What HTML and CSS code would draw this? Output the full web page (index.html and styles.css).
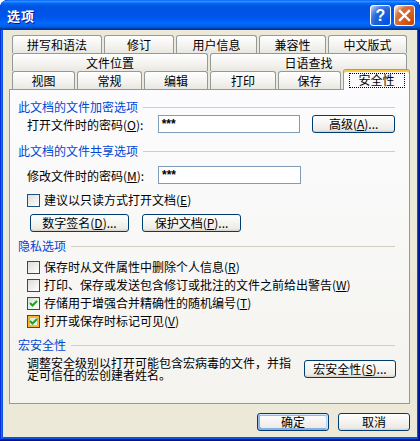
FILE: index.html
```html
<!DOCTYPE html>
<html lang="zh-CN">
<head>
<meta charset="utf-8">
<title>选项</title>
<link rel="stylesheet" href="styles.css">
</head>
<body>
<div class="window">
  <div class="titlebar">
    <span class="title">选项</span>
    <div class="tb-buttons">
      <div class="tb-btn help">?</div>
      <div class="tb-btn close">
        <svg width="19" height="19" viewBox="0 0 19 19"><path d="M5 5 L14 14 M14 5 L5 14" stroke="#fff" stroke-width="2.4" stroke-linecap="square"/></svg>
      </div>
    </div>
  </div>
  <div class="client">
    <div class="tabs">
      <div class="tabrow row1">
        <div class="tab">拼写和语法</div>
        <div class="tab">修订</div>
        <div class="tab">用户信息</div>
        <div class="tab">兼容性</div>
        <div class="tab">中文版式</div>
      </div>
      <div class="tabrow row2">
        <div class="tab">文件位置</div>
        <div class="tab">日语查找</div>
      </div>
      <div class="tabrow row3">
        <div class="tab">视图</div>
        <div class="tab">常规</div>
        <div class="tab">编辑</div>
        <div class="tab">打印</div>
        <div class="tab">保存</div>
        <div class="tab active"><span class="focus">安全性</span></div>
      </div>
    </div>
    <div class="panel">
      <div class="group-title">此文档的文件加密选项</div>
      <div class="field-row pw1">
        <span class="field-label">打开文件时的密码(<u>O</u>):</span>
        <div class="textbox">***</div>
        <div class="btn btn-adv">高级(<u>A</u>)...</div>
      </div>
      <div class="group-title gt2">此文档的文件共享选项</div>
      <div class="field-row pw2">
        <span class="field-label">修改文件时的密码(<u>M</u>):</span>
        <div class="textbox">***</div>
      </div>
      <div class="check-row single">
        <span class="cb"></span>
        <span>建议以只读方式打开文档(<u>E</u>)</span>
      </div>
      <div class="btn-row">
        <div class="btn btn-wide">数字签名(<u>D</u>)...</div>
        <div class="btn btn-wide">保护文档(<u>P</u>)...</div>
      </div>
      <div class="group-title gt3">隐私选项</div>
      <div class="check-list">
        <div class="check-row">
          <span class="cb"></span>
          <span>保存时从文件属性中删除个人信息(<u>R</u>)</span>
        </div>
        <div class="check-row">
          <span class="cb"></span>
          <span>打印、保存或发送包含修订或批注的文件之前给出警告(<u>W</u>)</span>
        </div>
        <div class="check-row">
          <span class="cb checked"><svg width="11" height="11" viewBox="0 0 11 11"><polyline points="2,5 4.5,7.5 9,3" fill="none" stroke="#21A121" stroke-width="2"/></svg></span>
          <span>存储用于增强合并精确性的随机编号(<u>T</u>)</span>
        </div>
        <div class="check-row">
          <span class="cb checked hot"><svg width="11" height="11" viewBox="0 0 11 11"><polyline points="2,5 4.5,7.5 9,3" fill="none" stroke="#21A121" stroke-width="2"/></svg></span>
          <span>打开或保存时标记可见(<u>V</u>)</span>
        </div>
      </div>
      <div class="group-title gt4">宏安全性</div>
      <div class="macro-row">
        <p class="macro-text">调整安全级别以打开可能包含宏病毒的文件，并指定可信任的宏创建者姓名。</p>
        <div class="btn btn-macro">宏安全性(<u>S</u>)...</div>
      </div>
    </div>
    <div class="footer">
      <div class="btn btn-foot default">确定</div>
      <div class="btn btn-foot">取消</div>
    </div>
  </div>
</div>
</body>
</html>
```
FILE: styles.css
```css
* { box-sizing: border-box; }
html, body { margin: 0; padding: 0; background: #ffffff; }
body {
  font-family: "Noto Sans CJK SC", "Noto Sans", sans-serif;
  font-size: 12px;
  color: #000;
}
u { text-decoration: underline; text-underline-offset: 1px; }

.window {
  width: 420px;
  height: 441px;
  display: flex;
  flex-direction: column;
  background: #0855dd;
  border-radius: 8px 8px 0 0;
  overflow: hidden;
  box-shadow: inset -1px -1px #00138c, inset 1px 1px #0831d9, inset -2px -2px #001ea0, inset 2px 2px #166aee;
}

.titlebar {
  height: 30px;
  flex: none;
  display: flex;
  align-items: center;
  justify-content: space-between;
  padding: 0 5px 0 7px;
  border-radius: 8px 8px 0 0;
  background: linear-gradient(180deg, #0058ee 0%, #3593ff 4%, #288eff 6%, #127dff 8%, #036ffc 10%, #0262ee 14%, #0057e5 20%, #0054e3 24%, #0055eb 56%, #005bf5 66%, #026afe 76%, #0062ef 86%, #0052d6 92%, #0040ab 94%, #003092 100%);
}
.title {
  color: #fff;
  font-weight: bold;
  font-size: 13px;
  letter-spacing: 1px;
  text-shadow: 1px 1px #0f1089;
}
.tb-buttons { display: flex; gap: 3px; }
.tb-btn {
  width: 21px;
  height: 21px;
  border: 1px solid #fff;
  border-radius: 3px;
  display: flex;
  align-items: center;
  justify-content: center;
}
.help {
  background: radial-gradient(circle at 90% 90%, #0054e9 0%, #2263d5 55%, #4479e4 70%, #a3bbec 90%, #fff 100%);
  color: #fff;
  font-family: "Liberation Sans", sans-serif;
  font-weight: bold;
  font-size: 16px;
  line-height: 19px;
}
.close {
  background: radial-gradient(circle at 90% 90%, #cc4600 0%, #dc6527 55%, #cd7546 70%, #ffccb2 90%, #fff 100%);
}

.client {
  flex: 1;
  margin: 0 3px 4px;
  padding: 5px 7px 0 6px;
  background: #ece9d8;
  display: flex;
  flex-direction: column;
}

.tabs { margin-left: 3px; }
.tabrow { display: grid; height: 18px; column-gap: 2px; }
.row1 { grid-template-columns: 90px 70px 81px 67px 79px; }
.row2 { grid-template-columns: 196px 197px; }
.row3 { grid-template-columns: 63px 65px 64px 66px 63px 67px; }
.tab {
  height: 18px;
  border: 1px solid #919b9c;
  border-bottom: none;
  border-radius: 3px 3px 0 0;
  background: linear-gradient(180deg, #ffffff, #f3f2ee 60%, #e8e7e1);
  text-align: center;
  line-height: 17px;
  white-space: nowrap;
}
.tab.active {
  height: 21px;
  margin: -2px 0 -1px;
  position: relative;
  z-index: 2;
  background: #fcfcfe;
  border-top-color: #e68b2c;
  box-shadow: inset 0 2px #ffc73c;
  padding-top: 3px;
  display: flex;
  justify-content: center;
}
.focus {
  display: block;
  width: 56px;
  height: 15px;
  line-height: 13px;
  outline: 1px dotted #000;
  outline-offset: -1px;
}

.panel {
  height: 315px;
  flex: none;
  border: 1px solid #919b9c;
  background: linear-gradient(180deg, #fcfcfe, #f4f3ee);
  padding: 10px 14px 0 8px;
}

.group-title {
  display: flex;
  align-items: center;
  height: 14px;
  line-height: 14px;
  color: #0046d5;
  white-space: nowrap;
}
.group-title::after {
  content: "";
  flex: 1;
  height: 1px;
  margin-left: 5px;
  background: #d0d0bf;
}
.gt2 { margin-top: 11px; }
.gt3 { margin-top: 7px; }
.gt4 { margin-top: 10px; }

.field-row {
  display: flex;
  align-items: center;
  height: 18px;
  margin-left: 9px;
}
.pw1 { margin-top: 1px; }
.pw2 { margin-top: 8px; }
.field-label { width: 131px; white-space: nowrap; }
.textbox {
  width: 143px;
  height: 18px;
  border: 1px solid #7f9db9;
  background: #fff;
  padding-left: 3px;
  line-height: 17px;
  font-family: "Liberation Sans", sans-serif;
  font-weight: bold;
  font-size: 12px;
}

.btn {
  height: 18px;
  border: 1px solid #003c74;
  border-radius: 3px;
  background: linear-gradient(180deg, #ffffff, #ecebe6 86%, #d6d0c5);
  display: flex;
  align-items: center;
  justify-content: center;
  white-space: nowrap;
  line-height: 16px;
}
.btn-adv { width: 83px; margin-left: 12px; }
.btn-wide { width: 99px; }
.btn-macro { width: 92px; flex: none; }
.btn-foot { width: 72px; }
.default {
  box-shadow: inset -1px 1px #cee7ff, inset 1px 2px #98b8ea, inset -2px 2px #bcd4f6, inset 1px -1px #89ade4, inset 2px -2px #89ade4;
}

.check-row {
  display: flex;
  align-items: center;
  height: 14px;
  line-height: 14px;
  margin-left: 9px;
  white-space: nowrap;
}
.single { margin-top: 9px; }
.check-list {
  margin-top: 7px;
  display: flex;
  flex-direction: column;
  gap: 4px;
}
.cb {
  width: 13px;
  height: 13px;
  flex: none;
  margin-right: 4px;
  border: 1px solid #1c5180;
  background: linear-gradient(135deg, #dcdcd7, #ffffff);
  display: flex;
  align-items: center;
  justify-content: center;
}
.cb.hot { box-shadow: inset 0 0 0 2px #f8b636; }

.btn-row {
  display: flex;
  gap: 13px;
  margin: 7px 0 0 12px;
}

.macro-row {
  display: flex;
  align-items: center;
  margin: 5px 0 0 9px;
  gap: 9px;
}
.macro-text {
  margin: 0;
  width: 268px;
  flex: none;
  line-height: 12px;
}

.footer {
  display: flex;
  justify-content: flex-end;
  gap: 9px;
  margin-top: 9px;
}
```
